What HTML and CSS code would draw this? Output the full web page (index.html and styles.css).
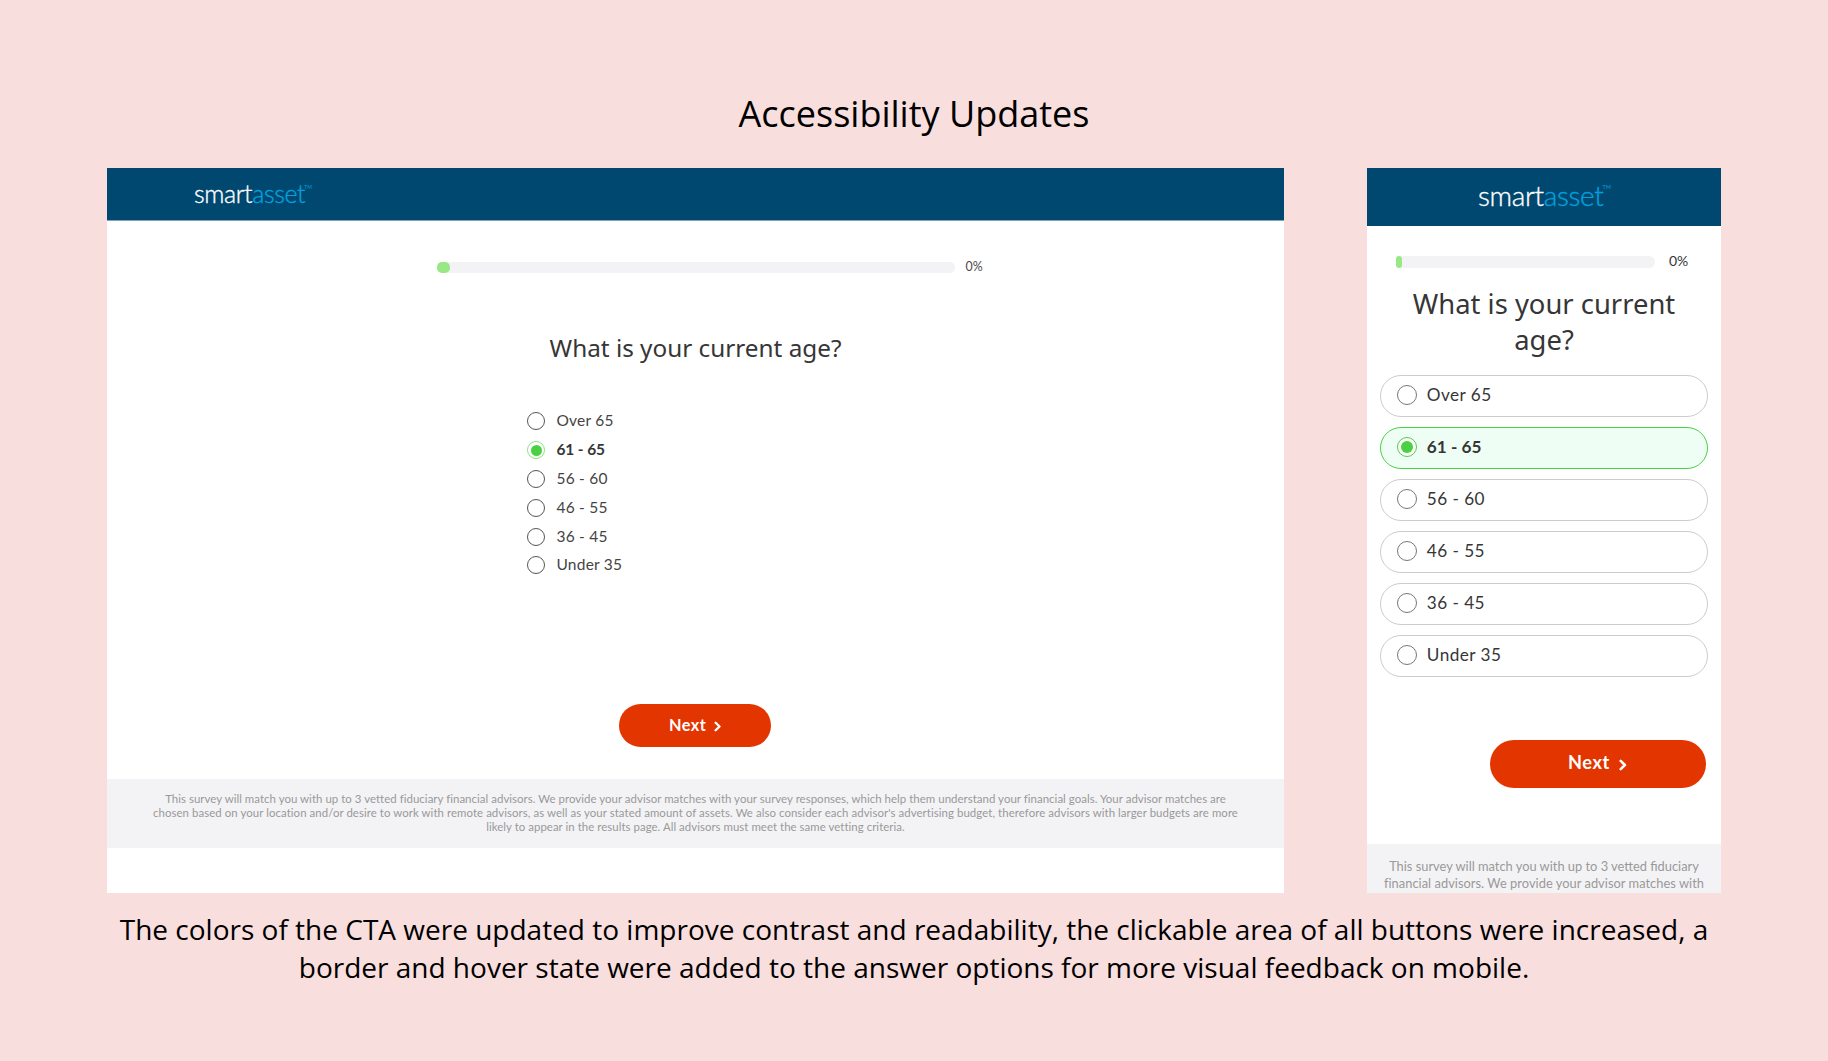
FILE: index.html
```
<!DOCTYPE html>
<html lang="en">
<head>
<meta charset="utf-8">
<title>Accessibility Updates</title>
<link rel="stylesheet" href="styles.css">
</head>
<body>
<h1 class="title">Accessibility Updates</h1>
<main class="screens">
  <section class="screen desktop">
    <header class="bar"><div class="logo"><span>smart</span><span class="logo-blue">asset</span><span class="tm">TM</span></div></header>
    <div class="progress"><div class="track"><div class="fill"></div></div><span class="percent">0%</span></div>
    <h2 class="question">What is your current age?</h2>
    <ul class="options">
      <li class="option"><i class="radio"></i><span class="label">Over 65</span></li>
      <li class="option selected"><i class="radio"></i><span class="label">61 - 65</span></li>
      <li class="option"><i class="radio"></i><span class="label">56 - 60</span></li>
      <li class="option"><i class="radio"></i><span class="label">46 - 55</span></li>
      <li class="option"><i class="radio"></i><span class="label">36 - 45</span></li>
      <li class="option"><i class="radio"></i><span class="label">Under 35</span></li>
    </ul>
    <button class="next"><span>Next</span><svg class="chevron" viewBox="0 0 8 12"><path d="M1.7 1.9 5.9 6 1.7 10.1"/></svg></button>
    <footer class="disclaimer">
      <p class="l1">This survey will match you with up to 3 vetted fiduciary financial advisors. We provide your advisor matches with your survey responses, which help them understand your financial goals. Your advisor matches are</p>
      <p class="l2">chosen based on your location and/or desire to work with remote advisors, as well as your stated amount of assets. We also consider each advisor's advertising budget, therefore advisors with larger budgets are more</p>
      <p class="l3">likely to appear in the results page. All advisors must meet the same vetting criteria.</p>
    </footer>
  </section>
  <section class="screen phone">
    <header class="bar"><div class="logo"><span>smart</span><span class="logo-blue">asset</span><span class="tm">TM</span></div></header>
    <div class="progress"><div class="track"><div class="fill"></div></div><span class="percent">0%</span></div>
    <h2 class="question">What is your current<br>age?</h2>
    <ul class="options">
      <li class="option"><i class="radio"></i><span class="label">Over 65</span></li>
      <li class="option selected"><i class="radio"></i><span class="label">61 - 65</span></li>
      <li class="option"><i class="radio"></i><span class="label">56 - 60</span></li>
      <li class="option"><i class="radio"></i><span class="label">46 - 55</span></li>
      <li class="option"><i class="radio"></i><span class="label">36 - 45</span></li>
      <li class="option"><i class="radio"></i><span class="label">Under 35</span></li>
    </ul>
    <button class="next"><span>Next</span><svg class="chevron" viewBox="0 0 8 12"><path d="M1.7 1.9 5.9 6 1.7 10.1"/></svg></button>
    <footer class="disclaimer">
      <p>This survey will match you with up to 3 vetted fiduciary</p>
      <p class="wide">financial advisors. We provide your advisor matches with</p>
    </footer>
  </section>
</main>
<p class="caption">The colors of the CTA were updated to improve contrast and readability, the clickable area of all buttons were increased, a<br>border and hover state were added to the answer options for more visual feedback on mobile.</p>
</body>
</html>
```
FILE: styles.css
```
* { box-sizing: border-box; margin: 0; padding: 0; }
body {
  min-height: 1061px;
  padding-top: 89px;
  background: #f9dede;
  color: #000;
  font-family: "Open Sans", "Noto Sans", sans-serif;
}
.title { font-size: 36px; font-weight: 400; line-height: 50px; text-align: center; }
.screens { display: flex; gap: 83px; margin: 29px 0 0 107px; }
.screen {
  display: flex;
  flex-direction: column;
  height: 725px;
  overflow: hidden;
  background: #fff;
  color: #363636;
  font-family: Lato, sans-serif;
}
.desktop { width: 1177px; }
.phone { width: 354px; }

/* Header and logo */
.bar { flex: none; display: flex; align-items: center; background: #00486f; }
.desktop .bar { height: 53px; padding: 0 0 2px 87px; border-bottom: 1px solid #7fa3b7; }
.phone .bar { height: 58px; padding: 0 0 4px 111px; }
.logo { display: flex; color: #fff; font-weight: 300; line-height: 1; white-space: nowrap; -webkit-text-stroke: 0.35px currentColor; }
.desktop .logo { font-size: 25px; letter-spacing: -0.4px; }
.phone .logo { font-size: 28px; letter-spacing: -0.35px; }
.logo-blue { color: #00a1df; }
.tm { color: #00a1df; font-size: 5px; font-weight: 400; line-height: 8px; padding-top: 2px; margin-left: -1px; letter-spacing: 0; -webkit-text-stroke: 0; }
.phone .tm { font-size: 5.5px; }

/* Progress */
.progress { flex: none; display: flex; align-items: center; }
.desktop .progress { height: 11px; margin: 41px 0 0 330px; }
.phone .progress { height: 12px; margin: 30px 0 0 29px; }
.track { height: 100%; border-radius: 5px; background: #f3f3f5; }
.desktop .track { width: 518px; }
.phone .track { width: 259px; border-radius: 6px; }
.fill { height: 100%; background: #98e886; }
.desktop .fill { width: 12.5px; border-radius: 5px; }
.phone .fill { width: 6px; border-radius: 3px; }
.percent { line-height: 1; }
.desktop .percent { margin-left: 10.5px; font-size: 12.4px; color: #4a4a4a; }
.phone .percent { margin-left: 14px; font-size: 14px; padding-bottom: 2px; }

/* Question */
.question { flex: none; font-family: "Noto Sans", sans-serif; font-weight: 400; text-align: center; }
.desktop .question { margin-top: 58px; font-size: 24.3px; line-height: 34px; }
.phone .question { margin-top: 18px; font-size: 27.4px; line-height: 36px; }

/* Answers */
.options { flex: none; list-style: none; }
.option { display: flex; align-items: center; }
.radio { flex: none; display: grid; place-items: center; border: 1px solid #555; border-radius: 50%; background: #fff; }
.selected .radio::after { content: ""; border-radius: 50%; background: #4ad143; }
.desktop .options { margin: 41.8px 0 0 420px; }
.desktop .option { height: 28.85px; }
.desktop .radio { width: 18px; height: 18px; }
.desktop .selected .radio { border-color: #8ae486; }
.desktop .radio::after { width: 11px; height: 11px; }
.desktop .label { margin-left: 11.4px; padding-bottom: 2px; font-size: 15.5px; line-height: 20px; letter-spacing: 0.25px; color: #444; }
.phone .options { display: grid; gap: 10px; margin: 17px 13px 0; }
.phone .option { height: 42px; padding: 0 0 2px 16px; border: 1px solid #ccc; border-radius: 21px; }
.phone .selected { border-color: #4ad143; background: #eefef4; }
.phone .radio { width: 20px; height: 20px; border-color: #777; }
.phone .selected .radio { border-color: #4ad143; }
.phone .radio::after { width: 12px; height: 12px; }
.phone .label { margin-left: 9.8px; padding-bottom: 1px; font-size: 17.2px; line-height: 22px; letter-spacing: 0.45px; }
.desktop .selected .label { font-weight: 700; letter-spacing: -0.1px; color: #363636; }
.phone .selected .label { font-weight: 700; letter-spacing: 0; }

/* Call to action */
.next { flex: none; display: flex; align-items: center; border: 0; background: #e33500; color: #fff; font-family: Lato, sans-serif; font-weight: 700; }
.desktop .next { width: 152px; height: 43px; margin: 124.2px 0 0 512.4px; padding: 0 0 3px 49.6px; border-radius: 22px; font-size: 16.3px; letter-spacing: 0.5px; }
.phone .next { width: 216px; height: 48px; margin: 63px 0 0 123px; padding: 0 0 4px 78px; border-radius: 24px; font-size: 18.2px; letter-spacing: 0.6px; }
.chevron { fill: none; stroke: #fff; stroke-width: 2.6; stroke-linecap: round; stroke-linejoin: round; }
.desktop .chevron { width: 7.5px; height: 11px; margin: 4px 0 0 8px; }
.phone .chevron { width: 8px; height: 12px; margin: 5px 0 0 9px; }

/* Disclaimer */
.disclaimer { flex: none; background: #f3f3f5; color: #999; text-align: center; white-space: nowrap; }
.desktop .disclaimer { height: 69px; margin-top: 32px; padding-top: 13px; font-size: 11.4px; line-height: 14.1px; }
.desktop .l1 { font-size: 11.46px; letter-spacing: 0.028px; }
.desktop .l2 { letter-spacing: 0.075px; }
.desktop .l3 { letter-spacing: 0.05px; }
.phone .disclaimer { height: 49px; margin-top: 56px; padding-top: 14.3px; font-size: 12.85px; line-height: 16.2px; }
.phone .wide { letter-spacing: 0.035px; }

.caption { margin-top: 17px; font-size: 28px; line-height: 38px; text-align: center; white-space: nowrap; }
```
